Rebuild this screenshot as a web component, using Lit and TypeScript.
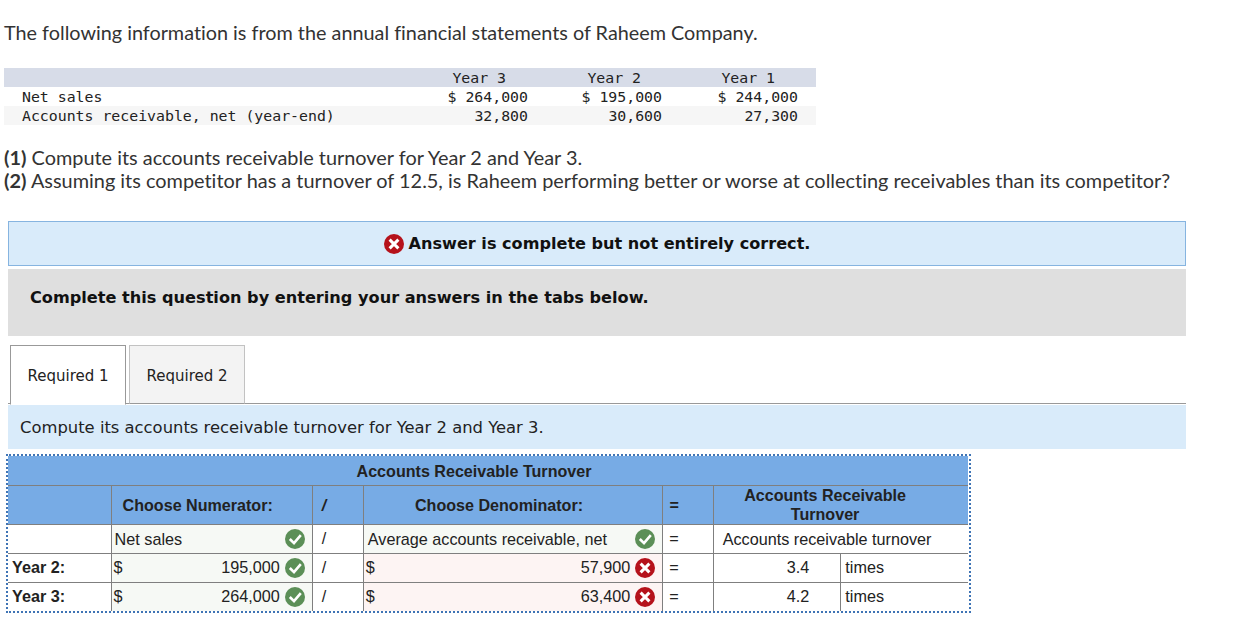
import { LitElement, html, css } from "lit";
import { customElement } from "lit/decorators.js";

const okIcon = html`<svg class="ico" viewBox="0 0 20 20"><circle cx="10" cy="10" r="10" fill="#5b8f57"/><path d="M4.8 10l4.2 4.2 6.8-8" fill="none" stroke="#fff" stroke-width="2.6"/></svg>`;
const badIcon = html`<svg class="ico" viewBox="0 0 20 20"><circle cx="10" cy="10" r="10" fill="#b5121b"/><path d="M5.6 5.6l8.8 8.8M14.4 5.6l-8.8 8.8" fill="none" stroke="#fff" stroke-width="3"/></svg>`;

@customElement("app-root")
export class AppRoot extends LitElement {
  static styles = css`
    :host { display: block; width: 1254px; height: 622px; overflow: hidden; background: #fff; color: #222; font-family: "Lato", sans-serif; font-variant-ligatures: none; }
    .intro { margin: 0; padding: 20px 0 0 4px; font-size: 19.82px; line-height: 25px; color: #333; }
    .data { margin: 23px 0 0 4px; width: 812px; font-family: "DejaVu Sans Mono", monospace; font-size: 14.85px; line-height: 21px; color: #222; }
    .data .row { display: grid; grid-template-columns: 399px 125px 134px 154px; height: 19px; white-space: pre; }
    .data .row > span { text-align: right; }
    .data .row > span:first-child { text-align: left; padding-left: 18px; }
    .data .head { background: #d7dce8; }
    .data .head > span { padding-right: 21px; }
    .data .head > span:nth-child(2) { padding-right: 22px; }
    .data .head > span:last-child { padding-right: 41px; }
    .data .head > span:first-child { padding: 0; }
    .data .alt { background: #f6f6f6; }
    .data .row:not(.head) > span:last-child { padding-right: 18px; }
    .q { margin: 21px 0 0 4px; font-size: 19.9px; line-height: 23px; color: #333; }
    .q b { font-weight: 700; }
    .wide { margin-left: 8px; width: 1178px; box-sizing: border-box; }
    .answer { margin-top: 29px; height: 45px; background: #d9ebfa; border: 1px solid #86b4e0; display: flex; align-items: center; justify-content: center; gap: 5px; font: 700 16.1px "DejaVu Sans", sans-serif; color: #111; }
    .complete { margin-top: 3px; height: 67px; background: #dfdfdf; padding: 0 22px 10px; display: flex; align-items: center; font: 700 16.15px "DejaVu Sans", sans-serif; color: #111; }
    .tabs { margin-top: 9px; height: 59px; border-bottom: 1px solid #999; display: flex; padding-left: 2px; gap: 3px; font: 15px "DejaVu Sans", sans-serif; color: #222; }
    .tab { width: 116px; height: 59px; box-sizing: border-box; border: 1px solid #c2c2c2; border-bottom: 1px solid #999; background: #f3f3f3; padding-top: 2px; display: flex; align-items: center; justify-content: center; }
    .tab.on { border-color: #999; border-bottom: 1px solid #fff; background: #fff; height: 60px; padding-top: 2px; }
    .prompt { margin-top: 1px; height: 44px; background: #d9ebfa; padding: 0 12px; display: flex; align-items: center; font: 16.39px "DejaVu Sans", sans-serif; color: #222; }
    .frame { margin: 5px 0 0 6px; width: 965px; box-sizing: border-box; border: 2px dotted #3f74b5; }
    table { border-collapse: collapse; border-style: hidden; table-layout: fixed; width: 960px; font: 16.2px/19px "Liberation Sans", sans-serif; color: #222; }
    td, th { border: 1px solid #7f7f7f; padding: 0; height: 29px; box-sizing: border-box; }
    th { background: #77abe5; font-weight: 700; font-size: 16.1px; text-align: center; color: #222; padding-right: 28px; }
    tr.t th { height: 29px; padding-top: 3px; }
    tr.h th { height: 39px; padding-top: 2px; }
    tr.h th.result { padding-top: 0; padding-right: 32px; }
    th.first { padding: 0; }
    .c0 { width: 103px; } .c1 { width: 201px; } .c2 { width: 51px; } .c3 { width: 299px; } .c4 { width: 51px; } .c5 { width: 127px; } .c6 { width: 127px; }
    .lab { font-weight: 700; padding-left: 4px; }
    td.sl, th.sl { padding: 0 0 0 9px; text-align: left; }
    th.sl { font-style: italic; }
    .eq { text-align: left; padding-left: 6px; }
    .g { background: #f6f9f5; }
    .r { background: #fdf4f3; }
    .cell { display: flex; align-items: center; justify-content: space-between; padding: 0 7px 0 2px; gap: 5px; }
    .cell.txt { padding-left: 4px; }
    .cell.txt.n { padding-left: 3px; }
    .cell.txt > span { padding-top: 2px; }
    .cell .num { margin-left: auto; }
    .ico { width: 20px; height: 20px; flex: none; display: block; }
    .ctr { text-align: center; padding-right: 28px; padding-top: 2px; }
    .val { text-align: right; padding-right: 31px; }
    .times { padding-left: 4px; }
  `;

  render() {
    return html`
      <p class="intro">The following information is from the annual financial statements of Raheem Company.</p>
      <div class="data">
        <div class="row head"><span></span><span>Year 3</span><span>Year 2</span><span>Year 1</span></div>
        <div class="row"><span>Net sales</span><span>$ 264,000</span><span>$ 195,000</span><span>$ 244,000</span></div>
        <div class="row alt"><span>Accounts receivable, net (year-end)</span><span>32,800</span><span>30,600</span><span>27,300</span></div>
      </div>
      <div class="q"><b>(1)</b> Compute its accounts receivable turnover for Year 2 and Year 3.<br><b>(2)</b> Assuming its competitor has a turnover of 12.5, is Raheem performing better or worse at collecting receivables than its competitor?</div>
      <div class="wide answer">${badIcon}<span>Answer is complete but not entirely correct.</span></div>
      <div class="wide complete">Complete this question by entering your answers in the tabs below.</div>
      <div class="wide tabs"><div class="tab on">Required 1</div><div class="tab">Required 2</div></div>
      <div class="wide prompt">Compute its accounts receivable turnover for Year 2 and Year 3.</div>
      <div class="frame">
        <table>
          <colgroup><col class="c0"><col class="c1"><col class="c2"><col class="c3"><col class="c4"><col class="c5"><col class="c6"></colgroup>
          <tr class="t"><th colspan="7">Accounts Receivable Turnover</th></tr>
          <tr class="h"><th class="first"></th><th>Choose Numerator:</th><th class="sl">/</th><th>Choose Denominator:</th><th>=</th><th class="result" colspan="2">Accounts Receivable<br>Turnover</th></tr>
          <tr><td></td><td class="g"><div class="cell txt n"><span>Net sales</span>${okIcon}</div></td><td class="sl">/</td><td class="g"><div class="cell txt"><span>Average accounts receivable, net</span>${okIcon}</div></td><td class="eq">=</td><td colspan="2" class="ctr">Accounts receivable turnover</td></tr>
          <tr><td class="lab">Year 2:</td><td class="g"><div class="cell"><span>$</span><span class="num">195,000</span>${okIcon}</div></td><td class="sl">/</td><td class="r"><div class="cell"><span>$</span><span class="num">57,900</span>${badIcon}</div></td><td class="eq">=</td><td class="val">3.4</td><td class="times">times</td></tr>
          <tr><td class="lab">Year 3:</td><td class="g"><div class="cell"><span>$</span><span class="num">264,000</span>${okIcon}</div></td><td class="sl">/</td><td class="r"><div class="cell"><span>$</span><span class="num">63,400</span>${badIcon}</div></td><td class="eq">=</td><td class="val">4.2</td><td class="times">times</td></tr>
        </table>
      </div>
    `;
  }
}
